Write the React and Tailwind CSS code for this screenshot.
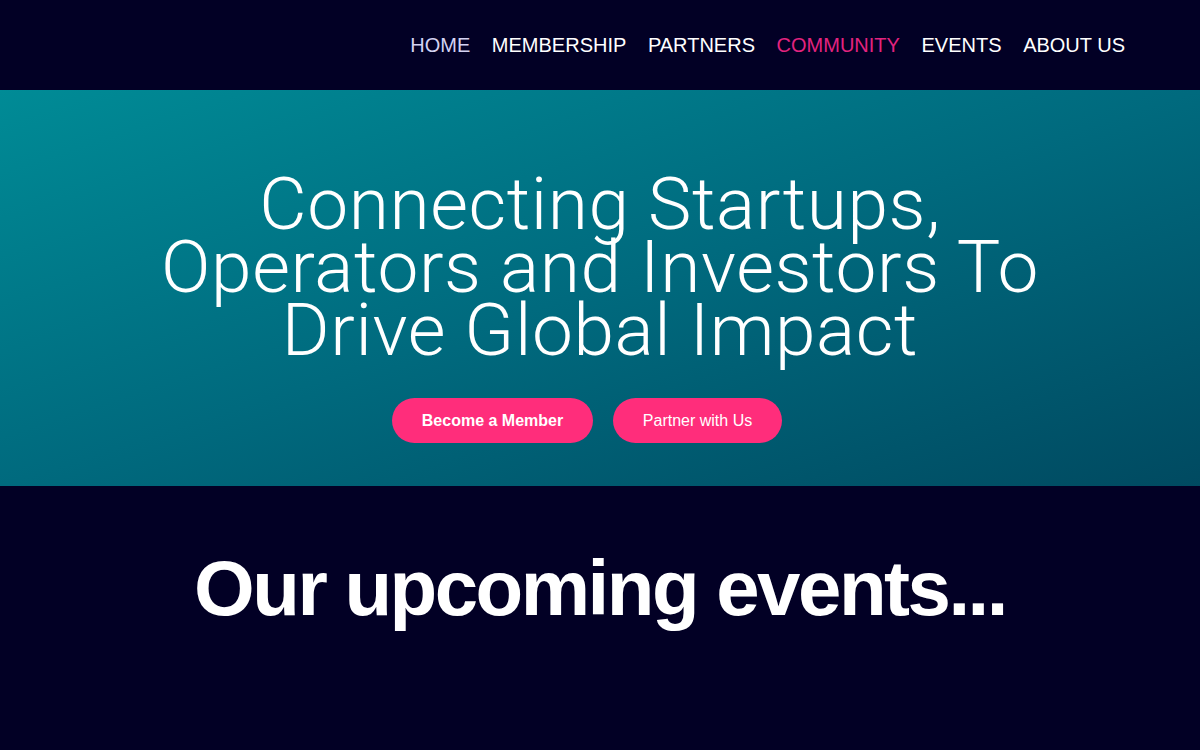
import React from 'react';

const navItems = [
  { name: 'HOME', color: 'text-[#d4d2f2]' },
  { name: 'MEMBERSHIP', color: 'text-white' },
  { name: 'PARTNERS', color: 'text-white' },
  { name: 'COMMUNITY', color: 'text-[#e3237f]' },
  { name: 'EVENTS', color: 'text-white' },
  { name: 'ABOUT US', color: 'text-white' },
];

const heroLines = ['Connecting Startups,', 'Operators and Investors To', 'Drive Global Impact'];

const App = () => {
  return (
    <div className="min-h-[750px] bg-[#020025] font-['Liberation_Sans',Arial,sans-serif]">
      {/* Header */}
      <header className="h-[90px] bg-[#020025] flex items-center justify-end pr-[75px]">
        <nav className="flex items-center gap-[21.6px]">
          {navItems.map((item) => (
            <a key={item.name} href="#" className={`text-[20px] leading-none ${item.color}`}>
              {item.name}
            </a>
          ))}
        </nav>
      </header>

      {/* Hero */}
      <section className="h-[396px] bg-gradient-to-br from-[#008b96] via-[#006a7e] to-[#004a61] flex flex-col items-center pt-[83px]">
        <h1 className="flex flex-col items-center text-center text-white font-['Roboto',sans-serif] font-light text-[73px] tracking-[0.6px]">
          {heroLines.map((line) => (
            <span key={line} className="block h-[63px] leading-[63px] whitespace-nowrap">
              {line}
            </span>
          ))}
        </h1>
        <div className="flex gap-[20px] mt-[36px] mr-[26px]">
          <button className="h-[45px] w-[201px] rounded-full bg-[#ff2d7b] text-white text-[16px] font-bold">
            Become a Member
          </button>
          <button className="h-[45px] w-[169px] rounded-full bg-[#ff2d7b] text-white text-[16px]">
            Partner with Us
          </button>
        </div>
      </section>

      {/* Events */}
      <section className="flex justify-center pt-[63px]">
        <h2 className="text-white font-bold text-[78px] leading-[78px] tracking-[-2.5px]">
          Our upcoming events...
        </h2>
      </section>
    </div>
  );
};

export default App;
